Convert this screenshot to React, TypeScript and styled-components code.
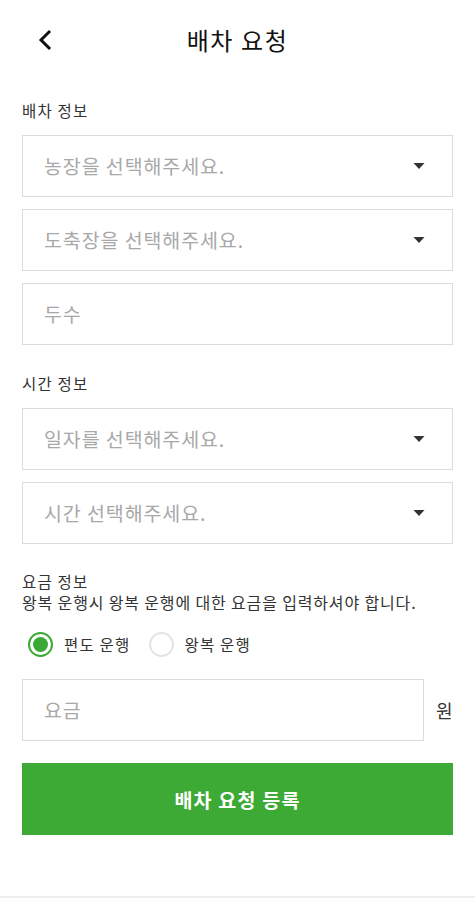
import { useState } from 'react';
import styled, { createGlobalStyle } from 'styled-components';

const GlobalStyle = createGlobalStyle`
    body {
        margin: 0;
        background: #ffffff;
        font-family: "Noto Sans CJK KR", "Noto Sans", sans-serif;
        color: #222222;
    }
`;

const ChevronLeft = () => (
    <svg width="18" height="22" viewBox="0 0 18 22">
        <path d="M13 3 L5 11 L13 19" fill="none" stroke="#111" strokeWidth="3" strokeLinecap="square" />
    </svg>
);

const Caret = () => (
    <svg width="12" height="8" viewBox="0 0 12 8">
        <path d="M0.5 1 L11.5 1 L6 7 Z" fill="#333" />
    </svg>
);

const SelectField = ({ placeholder }: { placeholder: string }) => (
    <Field>
        <Placeholder>{placeholder}</Placeholder>
        <Caret />
    </Field>
);

const App = () => {
    const [roundTrip, setRoundTrip] = useState(false);

    return (
        <Page>
            <GlobalStyle />
            <Header>
                <BackButton>
                    <ChevronLeft />
                </BackButton>
                <Title>배차 요청</Title>
            </Header>

            <Section>
                <SectionLabel>배차 정보</SectionLabel>
                <FieldList>
                    <SelectField placeholder="농장을 선택해주세요." />
                    <SelectField placeholder="도축장을 선택해주세요." />
                    <Field>
                        <Placeholder>두수</Placeholder>
                    </Field>
                </FieldList>
            </Section>

            <Section>
                <SectionLabel>시간 정보</SectionLabel>
                <FieldList>
                    <SelectField placeholder="일자를 선택해주세요." />
                    <SelectField placeholder="시간 선택해주세요." />
                </FieldList>
            </Section>

            <FeeSection>
                <FeeLabel>요금 정보</FeeLabel>
                <FeeHint>왕복 운행시 왕복 운행에 대한 요금을 입력하셔야 합니다.</FeeHint>
                <RadioRow>
                    <RadioOption onClick={() => setRoundTrip(false)}>
                        <RadioCircle $checked={!roundTrip} />
                        <RadioText>편도 운행</RadioText>
                    </RadioOption>
                    <RadioOption onClick={() => setRoundTrip(true)}>
                        <RadioCircle $checked={roundTrip} />
                        <RadioText>왕복 운행</RadioText>
                    </RadioOption>
                </RadioRow>
                <FeeRow>
                    <FeeField>
                        <Placeholder>요금</Placeholder>
                    </FeeField>
                    <Unit>원</Unit>
                </FeeRow>
            </FeeSection>

            <SubmitButton>배차 요청 등록</SubmitButton>
            <BottomLine />
        </Page>
    );
};

export default App;


const Page = styled.div`
    width: 475px;
    height: 900px;
    box-sizing: border-box;
    padding: 0 22px;
    display: flex;
    flex-direction: column;
    position: relative;
`;

const Header = styled.div`
    height: 80px;
    display: flex;
    align-items: center;
    justify-content: center;
    position: relative;
`;

const BackButton = styled.div`
    position: absolute;
    left: 14px;
    top: 29px;
    display: flex;
    cursor: pointer;
`;

const Title = styled.div`
    font-size: 24px;
    line-height: 30px;
    font-weight: 400;
    letter-spacing: 1.6px;
    color: #111;
`;

const Section = styled.div`
    display: flex;
    flex-direction: column;
    margin-top: 20px;
    & + & {
        margin-top: 28px;
    }
`;

const SectionLabel = styled.div`
    font-size: 15.5px;
    line-height: 20px;
    letter-spacing: 1.2px;
    color: #333;
    margin-bottom: 15px;
`;

const FieldList = styled.div`
    display: flex;
    flex-direction: column;
    gap: 12px;
`;

const Field = styled.div`
    height: 62px;
    box-sizing: border-box;
    border: 1px solid #dcdcdc;
    display: flex;
    align-items: center;
    justify-content: space-between;
    padding: 0 27px 0 21px;
    background: #fff;
`;

const Placeholder = styled.span`
    font-size: 19.5px;
    line-height: 24px;
    letter-spacing: 0.9px;
    color: #a8a8a8;
`;

const FeeSection = styled.div`
    display: flex;
    flex-direction: column;
    margin-top: 27px;
`;

const FeeLabel = styled.div`
    font-size: 15.5px;
    line-height: 20px;
    letter-spacing: 1.2px;
    color: #333;
`;

const FeeHint = styled.div`
    font-size: 16px;
    line-height: 22px;
    letter-spacing: 0.85px;
    color: #333;
    white-space: nowrap;
`;

const RadioRow = styled.div`
    display: flex;
    align-items: center;
    gap: 18px;
    margin-top: 10px;
    padding-left: 6px;
    height: 42px;
`;

const RadioOption = styled.div`
    display: flex;
    align-items: center;
    gap: 11px;
    cursor: pointer;
`;

const RadioCircle = styled.span<{ $checked: boolean }>`
    width: 25px;
    height: 25px;
    box-sizing: border-box;
    border-radius: 50%;
    border: 2px solid ${({ $checked }) => ($checked ? '#3aaa35' : '#e4e4e4')};
    display: flex;
    align-items: center;
    justify-content: center;
    &::after {
        content: '';
        width: 15px;
        height: 15px;
        border-radius: 50%;
        background: ${({ $checked }) => ($checked ? '#3aaa35' : 'transparent')};
    }
`;

const RadioText = styled.span`
    font-size: 15.5px;
    line-height: 20px;
    letter-spacing: 1.2px;
    color: #333;
`;

const FeeRow = styled.div`
    display: flex;
    align-items: center;
    margin-top: 14px;
`;

const FeeField = styled(Field)`
    width: 402px;
`;

const Unit = styled.span`
    margin-left: 12px;
    font-size: 18px;
    color: #333;
`;

const SubmitButton = styled.div`
    margin-top: 22px;
    height: 72px;
    background: #3daa36;
    color: #fff;
    font-size: 19.5px;
    font-weight: 700;
    letter-spacing: 1.2px;
    display: flex;
    align-items: center;
    justify-content: center;
    cursor: pointer;
`;

const BottomLine = styled.div`
    position: absolute;
    left: 0;
    right: 0;
    bottom: 2px;
    height: 2px;
    background: #eeeeee;
`;
